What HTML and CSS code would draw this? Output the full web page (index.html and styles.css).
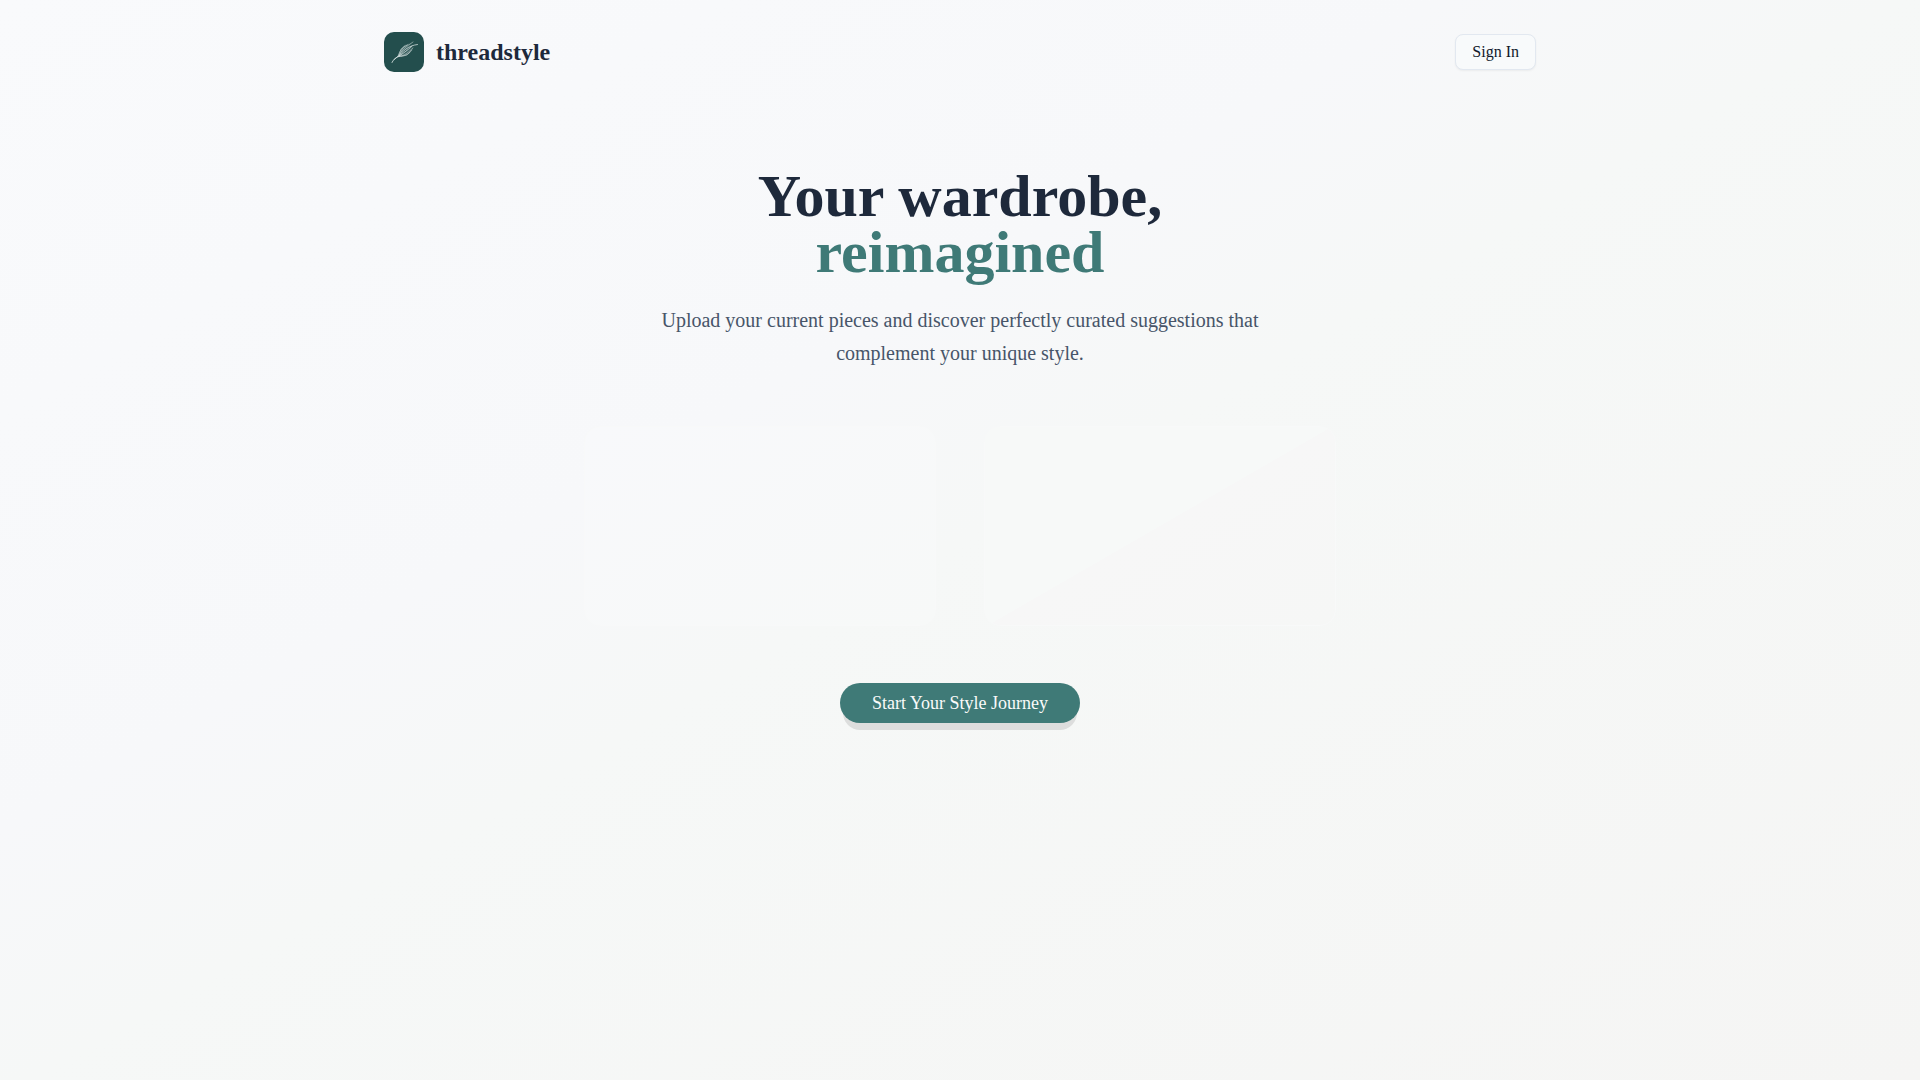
FILE: index.html
```html
<!DOCTYPE html>
<html lang="en">
<head>
  <meta charset="UTF-8">
  <meta name="viewport" content="width=device-width, initial-scale=1">
  <title>threadstyle</title>
  <link rel="stylesheet" href="styles.css">
</head>
<body>
  <div class="page">
    <header class="header">
      <div class="brand">
        <span class="brand__logo">
          <svg viewBox="0 0 40 40" aria-hidden="true">
            <path fill="#d5e0df" fill-opacity=".15" d="M13.500 25L17 17L24 12L28 11L25 15L29 15L26 21L22 24Z"/>
            <g fill="none" stroke="#d5e0df" stroke-opacity=".85" stroke-linecap="round">
              <path stroke-width="1" d="M8 30.500C9 28 11.500 26 14 24.500M10 27.500L16 23"/>
              <path stroke-width=".6" d="M14 24.500C15 20 18 15 23 13M14.500 24.500C17 19 22 14.500 29 10"/>
              <path stroke-width=".9" d="M15 24C18 20 24 13.500 33.500 12.500M15 24.500C19 21 23 19 28 14"/>
              <path stroke-width=".6" d="M15 24.500C20 24.500 24 23 28 18M15 24.500C20 24 25 20 29 16"/>
              <path stroke-width=".5" d="M15 23L17 17L21 13.500M16 22L19 16L24 12.500M17 24L23 23L26 20"/>
            </g>
          </svg>
        </span>
        <span class="brand__name">threadstyle</span>
      </div>
      <button class="button button--outline" type="button">Sign In</button>
    </header>

    <main class="hero">
      <h1 class="hero__title">Your wardrobe, <span class="hero__accent">reimagined</span></h1>
      <p class="hero__text">Upload your current pieces and discover perfectly curated suggestions that complement your unique style.</p>

      <div class="cards">
        <div class="card"></div>
        <div class="card card--warm"></div>
      </div>

      <button class="button button--primary" type="button">Start Your Style Journey</button>
    </main>
  </div>
</body>
</html>
```
FILE: styles.css
```css
*, *:before, *:after {
  box-sizing: border-box;
}

body {
  margin: 0;
  min-height: 100vh;
  font-family: 'Liberation Serif', serif;
  color: #1e293b;
  background: linear-gradient(150deg, #f9fafc 0%, #f7f8fa 38%, #f6f8f7 50%, #f5f5f4 100%);
}

.page {
  max-width: 1152px;
  margin: 0 auto;
}

.header {
  display: flex;
  align-items: center;
  justify-content: space-between;
  padding: 32px 0;
}

.brand {
  display: flex;
  align-items: center;
  gap: 12px;
}

.brand__logo {
  width: 40px;
  height: 40px;
  border-radius: 10px;
  background: #234e4d;
}

.brand__logo svg {
  display: block;
}

.brand__name {
  font-size: 24px;
  line-height: 32px;
  font-weight: bold;
}

.button {
  font-family: inherit;
  cursor: pointer;
}

.button--outline {
  height: 36px;
  padding: 0 16px;
  font-size: 16px;
  color: #0f172a;
  background: #f8fafb;
  border: 1px solid #e2e8f0;
  border-radius: 8px;
  box-shadow: 0 1px 2px rgba(0,0,0,0.05);
}

.hero {
  display: flex;
  flex-direction: column;
  align-items: center;
  padding: 64px 16px;
  text-align: center;
}

.hero__title {
  margin: 0 0 24px;
  font-size: 60px;
  line-height: 56px;
}

.hero__accent {
  display: block;
  color: #3f7a77;
}

.hero__text {
  max-width: 672px;
  margin: 0 0 56px;
  font-size: 20px;
  line-height: 33px;
  color: #475569;
}

.cards {
  display: grid;
  grid-template-columns: 1fr 1fr;
  gap: 48px;
  width: 100%;
  max-width: 752px;
  margin-bottom: 57px;
}

.card {
  height: 200px;
  border-radius: 16px;
  background: linear-gradient(150deg, #f8f9fb 0%, #f7f9f8 100%);
  border: 1px solid #f8f9f9;
}

.card--warm {
  background: linear-gradient(150deg, #f7f9f8 0%, #f7f9f8 50%, #f7f7f7 50%, #f6f7f6 100%);
}

.button--primary {
  height: 40px;
  padding: 0 32px;
  font-size: 18px;
  color: #fafafa;
  background: #3f7a77;
  border: 0;
  border-radius: 20px;
  box-shadow: 0 10px 0 -3px rgba(0,0,0,0.1);
}
```
